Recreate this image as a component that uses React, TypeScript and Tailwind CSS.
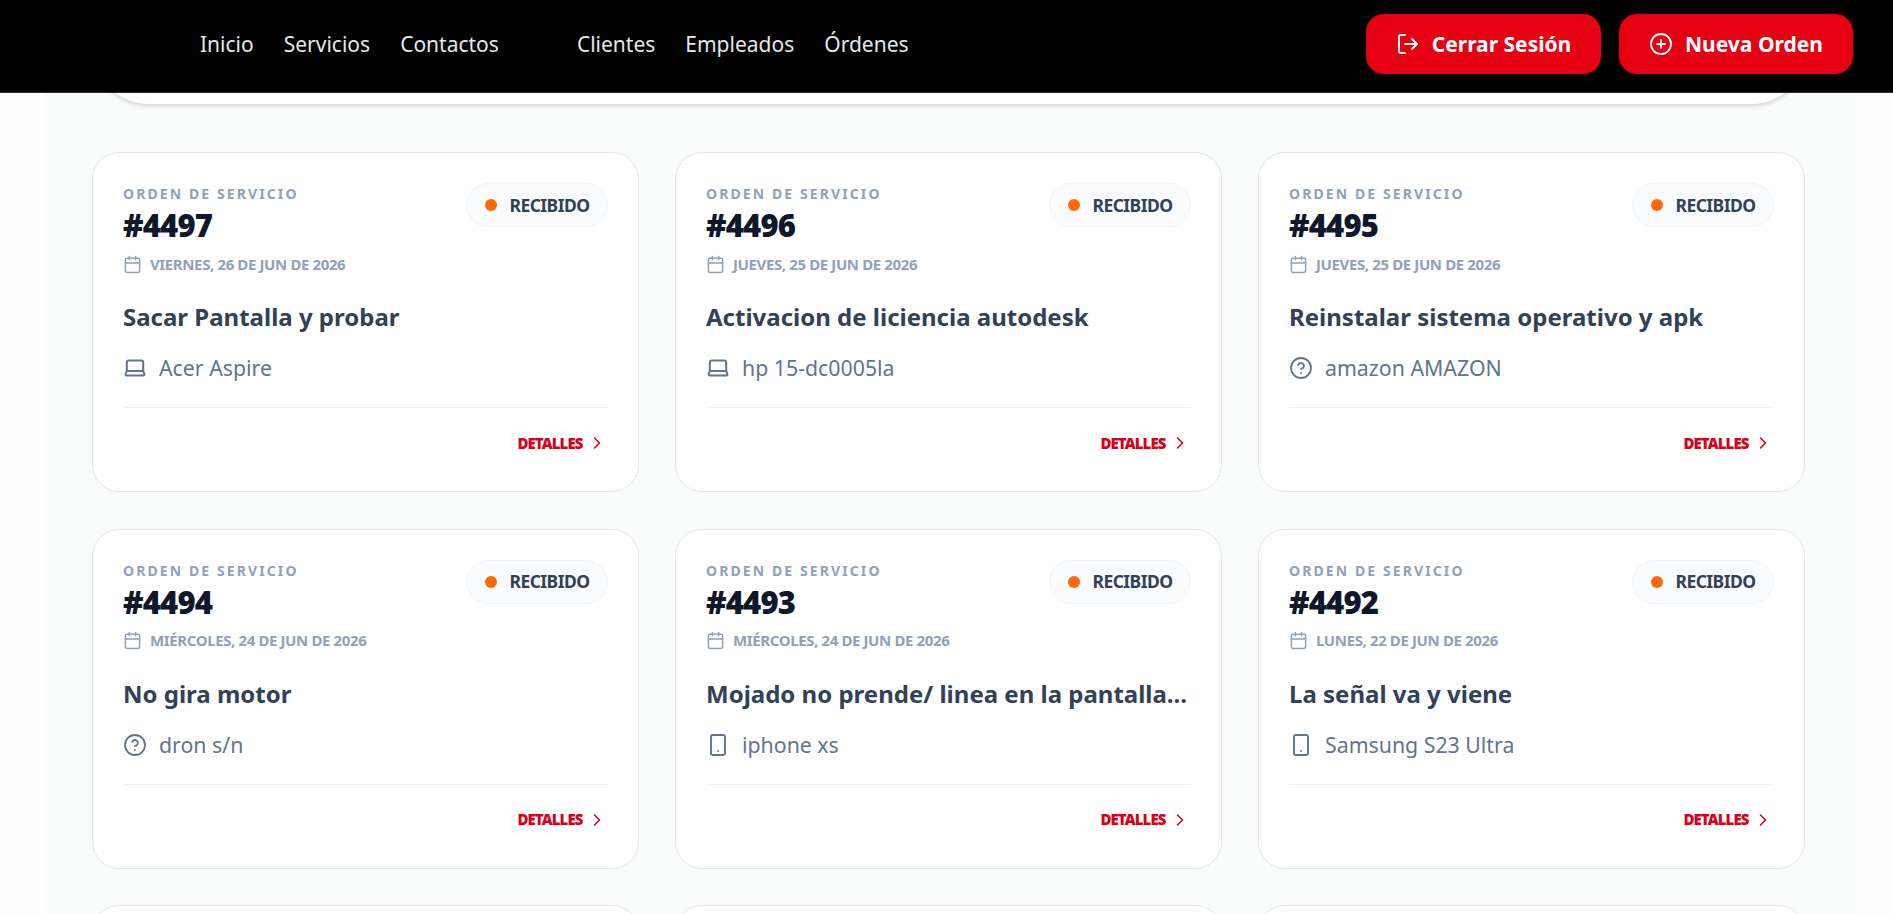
import React from "react";
import { Calendar, ChevronRight, CircleQuestionMark, CirclePlus, LogOut, Smartphone } from "lucide-react";

type Device = "laptop" | "phone" | "other";
type Order = { id: number; date: string; title: string; device: string; kind: Device };

const orders: Order[] = [
  { id: 4497, date: "viernes, 26 de jun de 2026", title: "Sacar Pantalla y probar", device: "Acer Aspire", kind: "laptop" },
  { id: 4496, date: "jueves, 25 de jun de 2026", title: "Activacion de liciencia autodesk", device: "hp 15-dc0005la", kind: "laptop" },
  { id: 4495, date: "jueves, 25 de jun de 2026", title: "Reinstalar sistema operativo y apk", device: "amazon AMAZON", kind: "other" },
  { id: 4494, date: "miércoles, 24 de jun de 2026", title: "No gira motor", device: "dron s/n", kind: "other" },
  { id: 4493, date: "miércoles, 24 de jun de 2026", title: "Mojado no prende/ linea en la pantalla...", device: "iphone xs", kind: "phone" },
  { id: 4492, date: "lunes, 22 de jun de 2026", title: "La señal va y viene", device: "Samsung S23 Ultra", kind: "phone" },
];

function DeviceIcon({ kind }: { kind: Device }) {
  if (kind === "phone") return <Smartphone size={24} strokeWidth={1.9} />;
  if (kind === "other") return <CircleQuestionMark size={24} strokeWidth={1.8} />;
  return (
    <svg width="24" height="24" viewBox="0 0 24 24" fill="none" stroke="currentColor" strokeWidth="2" strokeLinecap="round" strokeLinejoin="round">
      <path d="M3.8 15V6.400a2 2 0 0 1 2-2h12.400a2 2 0 0 1 2 2V15M3.800 15h16.400M3.800 15l-1.200 3.200a1.100 1.100 0 0 0 1.100 1.400h16.600a1.100 1.100 0 0 0 1.100-1.400L20.200 15" />
    </svg>
  );
}

function OrderCard({ order }: { order: Order }) {
  return (
    <article className="h-[340px] rounded-[27px] border border-[#e4e8ea] bg-white px-[30px] pt-[29px]">
      <div className="flex h-[93px] items-start justify-between">
        <div className="whitespace-nowrap">
          <p className="h-[23px] pt-px text-[14px] leading-[22px] font-bold tracking-[2.1px] text-[#90a1b9] uppercase">Orden de servicio</p>
          <h2 className="h-[40px] text-[31px] leading-[40px] font-black tracking-[-0.8px] text-[#0f172b]">#{order.id}</h2>
          <p className="flex h-[30px] items-center gap-[8px] pt-[8px] text-[15px] font-bold tracking-[-0.38px] text-[#90a1b9] uppercase">
            <Calendar size={19} strokeWidth={1.9} />
            {order.date}
          </p>
        </div>
        <span className="mt-px flex h-[44px] items-center gap-[12px] rounded-full border border-[#f1f5f9] bg-[#f9fbfd] pr-[17px] pl-[18px] text-[17.5px] font-bold tracking-[-0.55px] text-[#314158]">
          <i className="size-[12px] rounded-full bg-[#ff6900]" />
          RECIBIDO
        </span>
      </div>
      <h3 className="mt-[24px] h-[38px] text-[24px] leading-[36px] font-bold whitespace-nowrap text-[#314158]">{order.title}</h3>
      <p className="mt-[15px] flex h-[32px] items-center gap-[12px] text-[21.3px] text-[#62748e]">
        <DeviceIcon kind={order.kind} />
        {order.device}
      </p>
      <div className="mt-[23px] flex justify-end border-t border-[#eef2f6] pt-[21px] pr-px">
        <a className="flex h-[28px] items-center gap-[4px] text-[15px] font-black tracking-[-0.9px] text-[#d9001b]">
          DETALLES
          <ChevronRight size={20} strokeWidth={1.9} />
        </a>
      </div>
    </article>
  );
}

export default function App() {
  return (
    <div className="flex h-[914px] w-[1893px] flex-col overflow-hidden bg-[#fefefe] font-['Noto_Sans',sans-serif]">
      <header className="flex h-[93px] shrink-0 items-center justify-between border-b border-[#1e2939] bg-black pr-[40px] pb-[4px] pl-[200px]">
        <nav className="flex gap-[78px] pt-[2px] text-[21px] text-[#e5e7eb]">
          <div className="flex gap-[30px]">
            <a>Inicio</a>
            <a>Servicios</a>
            <a>Contactos</a>
          </div>
          <div className="flex gap-[30px]">
            <a>Clientes</a>
            <a>Empleados</a>
            <a>Órdenes</a>
          </div>
        </nav>
        <div className="flex gap-[18px] text-[21px] font-bold text-white">
          <button className="flex h-[60px] w-[235px] items-center justify-center gap-[12px] rounded-[18px] bg-[#e60012]">
            <LogOut size={24} strokeWidth={1.9} />
            <span className="pt-px">Cerrar Sesión</span>
          </button>
          <button className="flex h-[60px] w-[234px] items-center justify-center gap-[12px] rounded-[18px] bg-[#e60012]">
            <CirclePlus size={24} strokeWidth={1.8} />
            <span className="pt-px">Nueva Orden</span>
          </button>
        </div>
      </header>
      <main className="ml-[44px] flex h-[821px] w-[1812px] flex-col overflow-hidden bg-[#fafcfb] px-[48px]">
        <div className="flex h-[11px] shrink-0 flex-col justify-end">
          <div className="h-[120px] shrink-0 rounded-[57px] bg-white shadow-[0_2px_4px_rgba(0,0,0,0.16)]" />
        </div>
        <div className="mt-[48px] grid shrink-0 grid-cols-[546.5px_546.5px_546.5px] gap-x-[36.5px] gap-y-[36.5px]">
          {orders.map((o) => (
            <OrderCard key={o.id} order={o} />
          ))}
          {[1, 2, 3].map((n) => (
            <div key={n} className="h-[340px] rounded-[27px] border border-[#e4e8ea] bg-white" />
          ))}
        </div>
      </main>
    </div>
  );
}
